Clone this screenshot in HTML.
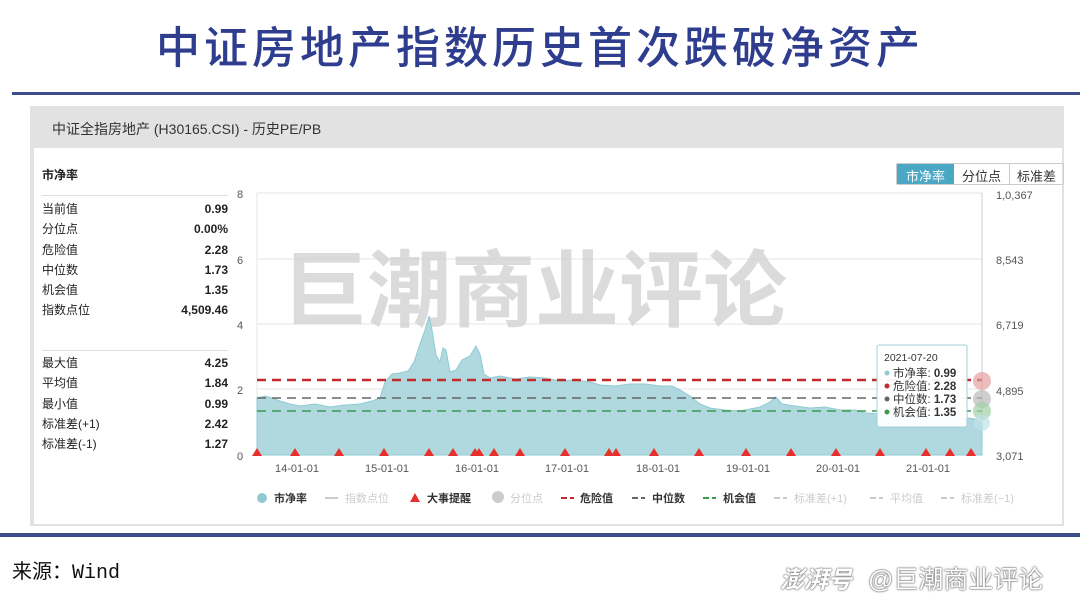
<!DOCTYPE html>
<html><head><meta charset="utf-8"><style>
*{margin:0;padding:0;box-sizing:border-box}
body{width:1080px;height:598px;background:#fff;position:relative;overflow:hidden;font-family:"Liberation Sans","Noto Sans CJK SC",sans-serif}
.a{position:absolute;white-space:nowrap}
.st{font-size:12px;color:#222}
.v{font-weight:bold;text-align:right;width:80px}
</style></head><body>
<div class="a" style="left:0;width:1080px;top:12px;text-align:center;font-size:44px;color:#2f3d8f;letter-spacing:4px;font-weight:500">中证房地产指数历史首次跌破净资产</div>
<div class="a" style="left:12px;top:92px;width:1068px;height:3px;background:#3c4d8e"></div>
<div class="a" style="left:30px;top:106px;width:1034px;height:420px;background:#e2e2e2"></div>
<div class="a" style="left:34px;top:148px;width:1028px;height:376px;background:#fff"></div>
<div class="a" style="left:52px;top:119px;font-size:14px;color:#333">中证全指房地产 (H30165.CSI) - 历史PE/PB</div>
<div class="a st" style="left:42px;top:166px;font-weight:bold">市净率</div>
<div class="a" style="left:42px;top:195px;width:186px;height:1px;background:#ddd"></div>
<div class="a" style="left:42px;top:350px;width:186px;height:1px;background:#ddd"></div>
<div class="a st" style="left:42px;top:199px;line-height:20.3px">当前值<br>分位点<br>危险值<br>中位数<br>机会值<br>指数点位</div>
<div class="a st v" style="left:148px;top:199px;line-height:20.3px">0.99<br>0.00%<br>2.28<br>1.73<br>1.35<br>4,509.46</div>
<div class="a st" style="left:42px;top:353px;line-height:20.3px">最大值<br>平均值<br>最小值<br>标准差(+1)<br>标准差(-1)</div>
<div class="a st v" style="left:148px;top:353px;line-height:20.3px">4.25<br>1.84<br>0.99<br>2.42<br>1.27</div>
<div class="a" style="left:896px;top:163px;height:22px;display:flex;font-size:13px;border:1px solid #ccc;border-radius:2px">
<div style="background:#4aa8c4;color:#fff;padding:2px 9px">市净率</div>
<div style="padding:2px 8px;border-right:1px solid #ccc;color:#333">分位点</div>
<div style="padding:2px 7px;color:#333">标准差</div></div>
<svg class="a" style="left:0;top:0" width="1080" height="598">
<g stroke="#e4e4e4" stroke-width="1"><line x1="257" y1="193" x2="982" y2="193"/><line x1="257" y1="259" x2="982" y2="259"/><line x1="257" y1="324" x2="982" y2="324"/><line x1="257" y1="389" x2="982" y2="389"/></g>
<line x1="257" y1="193" x2="257" y2="455" stroke="#e4e4e4"/>
<line x1="982" y1="193" x2="982" y2="455" stroke="#c8ccd8"/>
<g font-size="11" fill="#555" font-family="Liberation Sans,sans-serif"><text x="237" y="198">8</text><text x="237" y="264">6</text><text x="237" y="329">4</text><text x="237" y="394">2</text><text x="237" y="460">0</text>
<text x="996" y="199">1,0,367</text><text x="996" y="264">8,543</text><text x="996" y="329">6,719</text><text x="996" y="395">4,895</text><text x="996" y="460">3,071</text>
<text x="275" y="472">14-01-01</text><text x="365" y="472">15-01-01</text><text x="455" y="472">16-01-01</text><text x="545" y="472">17-01-01</text><text x="636" y="472">18-01-01</text><text x="726" y="472">19-01-01</text><text x="816" y="472">20-01-01</text><text x="906" y="472">21-01-01</text></g>
<text x="283" y="320" font-size="84" fill="#cfcfcf" fill-opacity="0.75" font-family="Noto Sans CJK SC,sans-serif" font-weight="bold">巨潮商业评论</text>
<path fill="#afd9df" stroke="#8fcad3" stroke-width="1" d="M257,455 L257,398 L265,396 L272,398 L280,401 L290,404 L300,406 L315,404 L330,407 L345,405 L360,404 L372,401 L380,398 L385,382 L392,374 L400,373 L408,371 L414,362 L420,344 L425,330 L429,316 L432,330 L436,355 L440,362 L443,348 L446,350 L450,372 L456,370 L462,360 L470,356 L476,346 L480,354 L484,374 L490,378 L500,376 L515,379 L530,377 L545,378 L560,381 L575,380 L590,382 L600,385 L615,386 L630,384 L645,384 L660,386 L672,386 L680,390 L690,396 L700,404 L710,408 L725,410 L740,411 L750,409 L760,407 L770,402 L776,397 L782,404 L795,406 L810,408 L825,407 L840,410 L855,410 L865,413 L880,414 L900,415 L920,414 L940,415 L960,417 L975,419 L982,423 L982,455 Z"/>
<g stroke-width="2.5" stroke-dasharray="9,6"><line x1="257" y1="380" x2="982" y2="380" stroke="#c12b2b"/><line x1="257" y1="398" x2="982" y2="398" stroke="#666" stroke-width="1.5"/><line x1="257" y1="411" x2="982" y2="411" stroke="#3b9a50" stroke-width="1.5"/></g>
<circle cx="982" cy="381" r="9" fill="#e5a0a0" fill-opacity=".7"/><circle cx="982" cy="399" r="9" fill="#bbb" fill-opacity=".7"/><circle cx="982" cy="411" r="9" fill="#9fd0a8" fill-opacity=".7"/><circle cx="982" cy="423" r="8" fill="#bfe2e8" fill-opacity=".7"/>
<g fill="#e8302a">
<path d="M257,448l-5,8h10z"/><path d="M295,448l-5,8h10z"/><path d="M339,448l-5,8h10z"/><path d="M384,448l-5,8h10z"/><path d="M429,448l-5,8h10z"/><path d="M453,448l-5,8h10z"/><path d="M475,448l-5,8h10z"/><path d="M479,448l-5,8h10z"/><path d="M494,448l-5,8h10z"/><path d="M520,448l-5,8h10z"/><path d="M565,448l-5,8h10z"/><path d="M609,448l-5,8h10z"/><path d="M616,448l-5,8h10z"/><path d="M654,448l-5,8h10z"/><path d="M699,448l-5,8h10z"/><path d="M746,448l-5,8h10z"/><path d="M791,448l-5,8h10z"/><path d="M836,448l-5,8h10z"/><path d="M880,448l-5,8h10z"/><path d="M926,448l-5,8h10z"/><path d="M950,448l-5,8h10z"/><path d="M971,448l-5,8h10z"/></g>
<rect x="877" y="345" width="90" height="82" rx="2" fill="#fff" fill-opacity=".95" stroke="#9fd0da"/>
<g font-size="11.5" fill="#333" font-family="Liberation Sans,Noto Sans CJK SC,sans-serif"><text x="884" y="361" font-size="10.5">2021-07-20</text>
<circle cx="887" cy="373" r="2.5" fill="#8fcad3"/><text x="893" y="377">市净率: <tspan font-weight="bold">0.99</tspan></text>
<circle cx="887" cy="386" r="2.5" fill="#c12b2b"/><text x="893" y="390">危险值: <tspan font-weight="bold">2.28</tspan></text>
<circle cx="887" cy="399" r="2.5" fill="#666"/><text x="893" y="403">中位数: <tspan font-weight="bold">1.73</tspan></text>
<circle cx="887" cy="412" r="2.5" fill="#3b9a50"/><text x="893" y="416">机会值: <tspan font-weight="bold">1.35</tspan></text></g>
<g font-size="11" font-family="Liberation Sans,Noto Sans CJK SC,sans-serif">
<circle cx="262" cy="498" r="5" fill="#8fcad3"/><text x="274" y="502" fill="#333" font-weight="bold">市净率</text>
<line x1="325" y1="498" x2="338" y2="498" stroke="#ccc" stroke-width="2"/><text x="345" y="502" fill="#ccc">指数点位</text>
<path d="M415,493l-5,9h10z" fill="#e8302a"/><text x="427" y="502" fill="#333" font-weight="bold">大事提醒</text>
<circle cx="498" cy="497" r="6" fill="#ccc"/><text x="510" y="502" fill="#ccc">分位点</text>
<line x1="561" y1="498" x2="574" y2="498" stroke="#c12b2b" stroke-width="2" stroke-dasharray="6,3"/><text x="580" y="502" fill="#333" font-weight="bold">危险值</text>
<line x1="632" y1="498" x2="645" y2="498" stroke="#666" stroke-width="2" stroke-dasharray="6,3"/><text x="652" y="502" fill="#333" font-weight="bold">中位数</text>
<line x1="703" y1="498" x2="716" y2="498" stroke="#3b9a50" stroke-width="2" stroke-dasharray="6,3"/><text x="723" y="502" fill="#333" font-weight="bold">机会值</text>
<line x1="774" y1="498" x2="787" y2="498" stroke="#ccc" stroke-width="2" stroke-dasharray="6,3"/><text x="794" y="502" fill="#ccc">标准差(+1)</text>
<line x1="870" y1="498" x2="883" y2="498" stroke="#ccc" stroke-width="2" stroke-dasharray="6,3"/><text x="890" y="502" fill="#ccc">平均值</text>
<line x1="941" y1="498" x2="954" y2="498" stroke="#ccc" stroke-width="2" stroke-dasharray="6,3"/><text x="961" y="502" fill="#ccc">标准差(−1)</text></g>
</svg>
<div class="a" style="left:0;top:533px;width:1080px;height:4px;background:#3c4d8e"></div>
<div class="a" style="left:12px;top:555px;font-size:20px;color:#111;font-family:'Liberation Mono','Noto Sans CJK SC',monospace">来源：Wind</div>
<div class="a" style="left:780px;top:560px;font-size:24px;color:#fff;font-style:italic;font-weight:bold;text-shadow:0 0 2px #666,0 0 1px #333">澎湃号</div>
<div class="a" style="left:868px;top:560px;font-size:25px;color:#fff;text-shadow:0 0 2px #555,0 0 1px #333">@巨潮商业评论</div>
</body></html>
